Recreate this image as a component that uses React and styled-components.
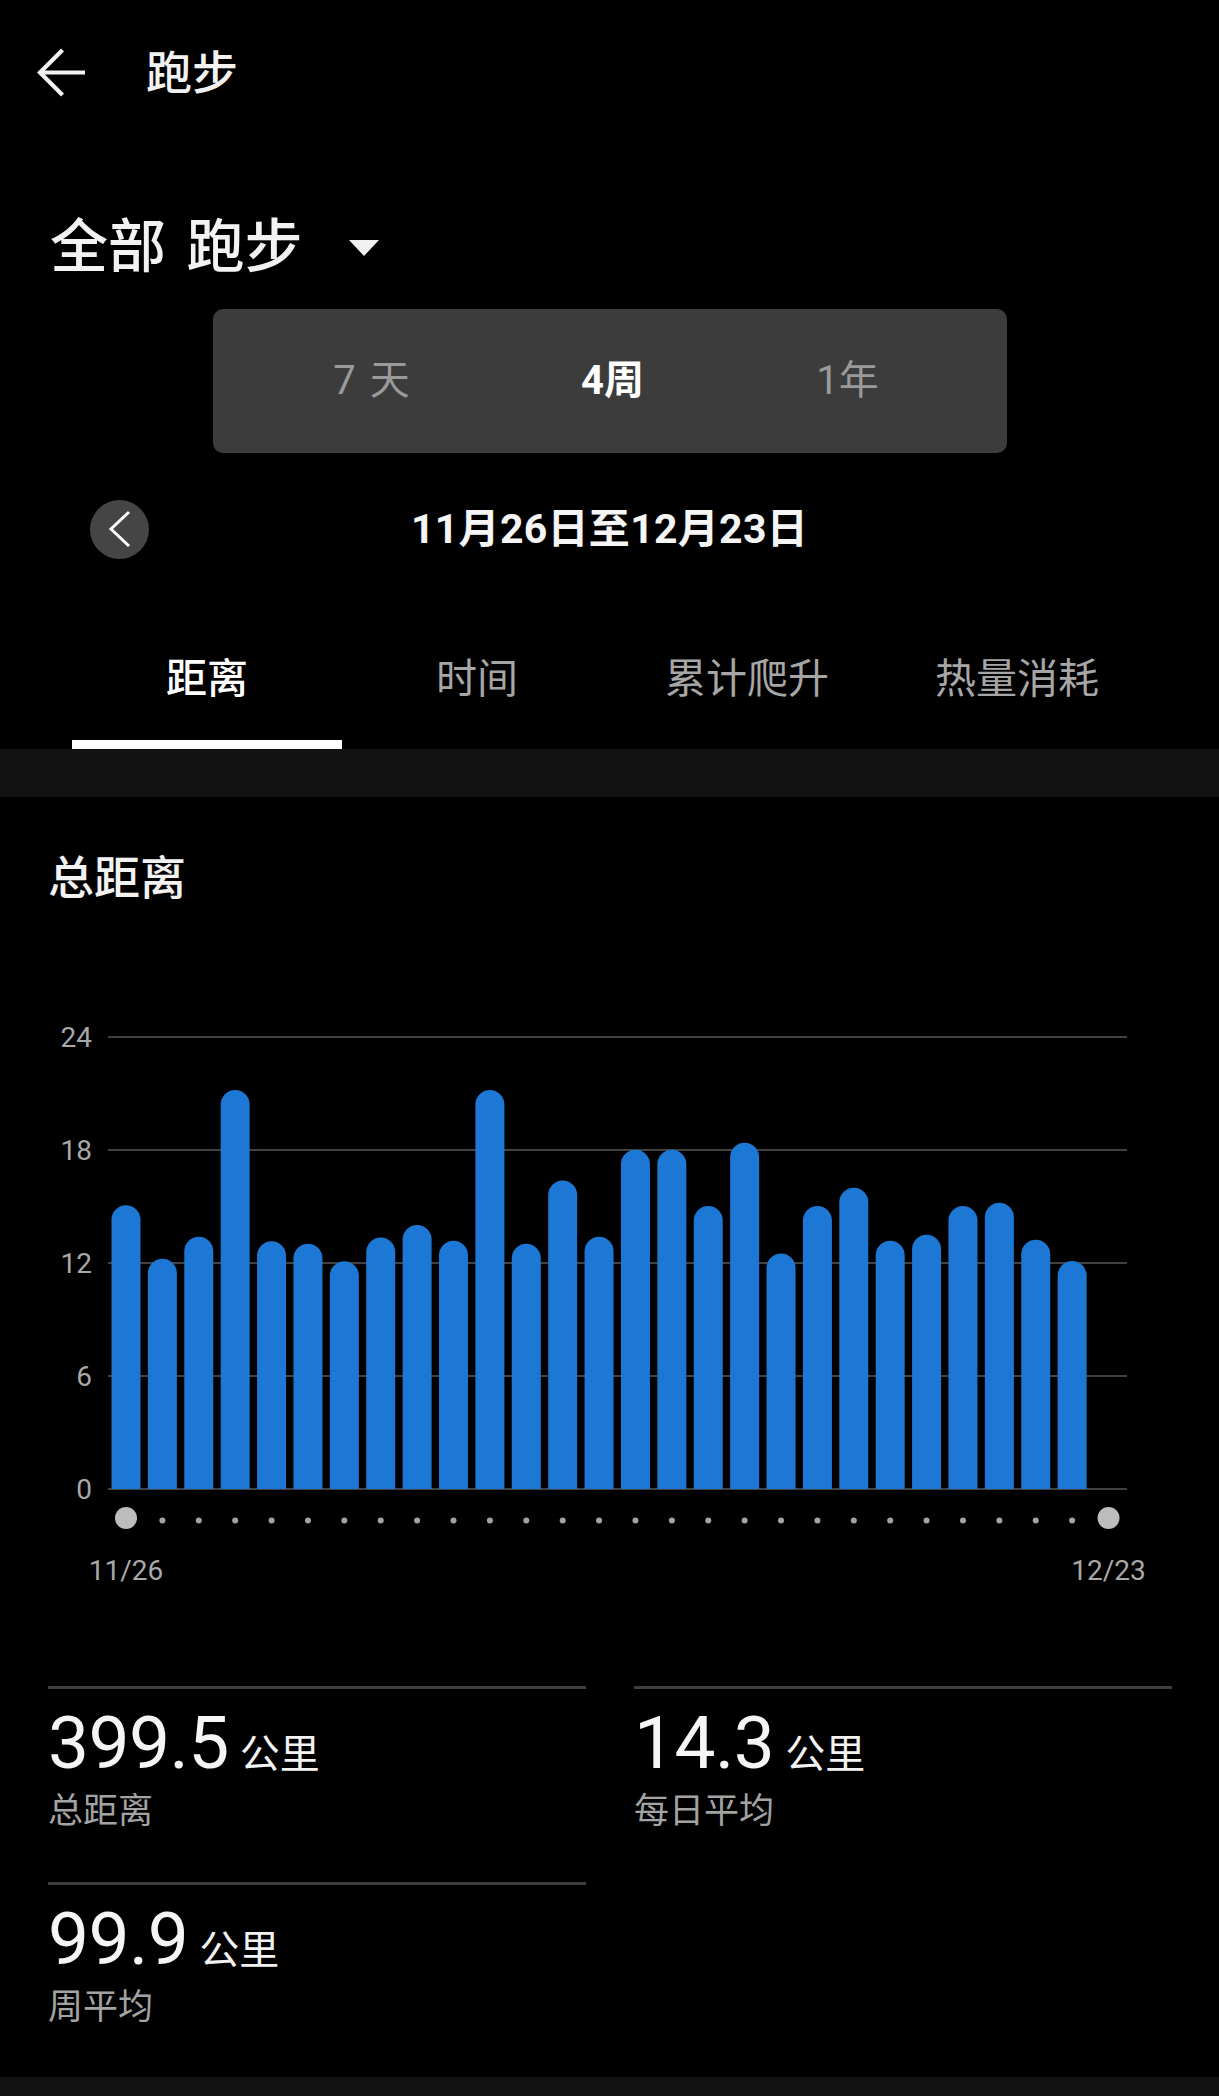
import React from "react";
import styled, { createGlobalStyle } from "styled-components";

const GlobalStyle = createGlobalStyle`
  html, body {
    margin: 0;
    padding: 0;
    background: #000;
  }
  body {
    font-family: Roboto, "Noto Sans CJK SC", "Noto Sans", sans-serif;
    color: #f2f2f2;
    -webkit-font-smoothing: antialiased;
  }
  * { box-sizing: border-box; }
`;

const Page = styled.div`
  width: 1219px;
  min-height: 2096px;
  background: #000;
  display: flex;
  flex-direction: column;
`;

const Header = styled.header`
  height: 146px;
  display: flex;
  align-items: center;
  padding-left: 36px;
  gap: 60px;
`;

const IconButton = styled.button`
  border: 0;
  padding: 0;
  background: transparent;
  display: flex;
  align-items: center;
  justify-content: center;
  color: #f2f2f2;
`;

const HeaderTitle = styled.h1`
  margin: 0;
  font-size: 46px;
  line-height: 60px;
  font-weight: 500;
  color: #f2f2f2;
`;

const FilterRow = styled.div`
  margin-top: 66px;
  padding-left: 50px;
  display: flex;
  align-items: center;
  height: 70px;
`;

const FilterTitle = styled.div`
  font-size: 58px;
  line-height: 70px;
  font-weight: 500;
  color: #f2f2f2;
  word-spacing: 6px;
`;

const Caret = styled.svg`
  margin-left: 47px;
  margin-top: 2px;
`;

const Segment = styled.div`
  margin: 27px auto 0;
  width: 794px;
  height: 144px;
  background: #3c3c3c;
  border-radius: 10px;
  padding: 0 40px;
  display: grid;
  grid-template-columns: repeat(3, 1fr);
  align-items: center;
`;

const SegmentItem = styled.div`
  text-align: center;
  font-size: 40px;
  line-height: 50px;
  font-weight: ${(p) => (p.$active ? 700 : 400)};
  color: ${(p) => (p.$active ? "#ffffff" : "#9a9a9a")};
  word-spacing: ${(p) => (p.$spaced ? "4px" : "0")};
  padding-left: ${(p) => (p.$active ? "6px" : "0")};
`;

const DateRow = styled.div`
  margin-top: 46px;
  height: 60px;
  padding: 0 90px;
  display: grid;
  grid-template-columns: 1fr auto 1fr;
  align-items: center;
`;

const PrevButton = styled.button`
  width: 59px;
  height: 59px;
  border-radius: 50%;
  border: 0;
  padding: 0;
  background: #454545;
  display: flex;
  align-items: center;
  justify-content: center;
  justify-self: start;
`;

const DateText = styled.div`
  font-size: 41px;
  line-height: 60px;
  font-weight: 700;
  color: #f5f5f5;
  letter-spacing: 0.3px;
`;

const Tabs = styled.nav`
  display: grid;
  grid-template-columns: repeat(4, 270px);
  padding-left: 72px;
`;

const Tab = styled.div`
  height: 190px;
  padding-top: 95px;
  text-align: center;
  font-size: 41px;
  line-height: 50px;
  font-weight: ${(p) => (p.$active ? 500 : 400)};
  color: ${(p) => (p.$active ? "#ffffff" : "#a6a6a6")};
  border-bottom: 9px solid ${(p) => (p.$active ? "#ffffff" : "transparent")};
`;

const Band = styled.div`
  height: ${(p) => p.$h}px;
  background: #121212;
`;

const CardTitle = styled.h2`
  margin: 51px 0 0;
  padding-left: 48px;
  font-size: 46px;
  line-height: 60px;
  font-weight: 500;
  color: #f2f2f2;
`;

const ChartSvg = styled.svg`
  display: block;
  margin-top: 92px;
  font-family: Roboto, "Noto Sans", sans-serif;
`;

const StatsGrid = styled.div`
  margin-top: 86px;
  padding: 0 47px 47px 48px;
  display: grid;
  grid-template-columns: 538px 538px;
  column-gap: 48px;
  row-gap: 48px;
`;

const Stat = styled.div`
  border-top: 3px solid #3e3e3e;
  padding-top: 14px;
`;

const StatValue = styled.div`
  font-size: 73px;
  line-height: 80px;
  height: 80px;
  font-weight: 400;
  color: #f5f5f5;
  white-space: nowrap;
  letter-spacing: -0.5px;
`;

const StatUnit = styled.span`
  font-size: 40px;
  line-height: 1;
  margin-left: 11px;
  letter-spacing: 0;
  color: #f2f2f2;
`;

const StatLabel = styled.div`
  margin-top: 7px;
  font-size: 35px;
  line-height: 44px;
  color: #a3a3a3;
`;

const values = [
  15.07, 12.22, 13.4, 21.18, 13.16, 13.02, 12.09, 13.35, 14.02, 13.18,
  21.18, 13.02, 16.38, 13.4, 18.01, 18.01, 15.03, 18.39, 12.51, 15.03,
  16.0, 13.18, 13.5, 15.03, 15.2, 13.23, 12.11,
];

const BASE = 489;
const UNIT = 452 / 24;
const X0 = 126;
const PITCH = 36.39;
const BAR_W = 29;

function barPath(cx, v) {
  const r = BAR_W / 2;
  const top = BASE - v * UNIT;
  const x = cx - r;
  return `M${x} ${BASE} V${top + r} A${r} ${r} 0 0 1 ${x + BAR_W} ${top + r} V${BASE} Z`;
}

function Chart() {
  const grid = [24, 18, 12, 6, 0];
  const dots = Array.from({ length: 28 }, (_, i) => X0 + i * PITCH);
  return (
    <ChartSvg width="1219" height="600" viewBox="0 0 1219 600">
      {grid.map((g) => {
        const y = BASE - g * UNIT;
        return (
          <g key={g}>
            <line x1="108" x2="1127" y1={y} y2={y} stroke="#424242" strokeWidth="1.8" />
            <text x="92" y={y} textAnchor="end" dominantBaseline="central" fontSize="28" fill="#a8a8a8">
              {g}
            </text>
          </g>
        );
      })}
      {values.map((v, i) => (
        <path key={i} d={barPath(X0 + i * PITCH, v)} fill="#1d77d5" />
      ))}
      {dots.map((x, i) =>
        i === 0 || i === dots.length - 1 ? (
          <circle key={i} cx={x} cy="518" r="11" fill="#bdbdbd" />
        ) : (
          <circle key={i} cx={x} cy="520.5" r="3" fill="#a3a3a3" />
        )
      )}
      <text x={X0} y="570" textAnchor="middle" dominantBaseline="central" fontSize="28" fill="#a8a8a8">
        11/26
      </text>
      <text x={X0 + 27 * PITCH} y="570" textAnchor="middle" dominantBaseline="central" fontSize="28" fill="#a8a8a8">
        12/23
      </text>
    </ChartSvg>
  );
}

const stats = [
  { value: "399.5", label: "总距离" },
  { value: "14.3", label: "每日平均" },
  { value: "99.9", label: "周平均" },
];

export default function App() {
  return (
    <>
      <GlobalStyle />
      <Page>
        <Header>
          <IconButton aria-label="返回">
            <svg width="50" height="50" viewBox="0 0 50 50">
              <path d="M49 24.5 H4 M26.5 2 L4 24.5 L26.5 47" fill="none" stroke="#f2f2f2" strokeWidth="4.2" />
            </svg>
          </IconButton>
          <HeaderTitle>跑步</HeaderTitle>
        </Header>

        <FilterRow>
          <FilterTitle>全部 跑步</FilterTitle>
          <Caret width="30" height="16" viewBox="0 0 30 16">
            <polygon points="0,0 30,0 15,16" fill="#f2f2f2" />
          </Caret>
        </FilterRow>

        <Segment>
          <SegmentItem $spaced>7 天</SegmentItem>
          <SegmentItem $active>4周</SegmentItem>
          <SegmentItem>1年</SegmentItem>
        </Segment>

        <DateRow>
          <PrevButton aria-label="上一段">
            <svg width="24" height="38" viewBox="0 0 24 38">
              <path d="M21 2 L3 19 L21 36" fill="none" stroke="#ffffff" strokeWidth="3" />
            </svg>
          </PrevButton>
          <DateText>11月26日至12月23日</DateText>
          <span />
        </DateRow>

        <Tabs>
          <Tab $active>距离</Tab>
          <Tab>时间</Tab>
          <Tab>累计爬升</Tab>
          <Tab>热量消耗</Tab>
        </Tabs>

        <Band $h={48} />

        <CardTitle>总距离</CardTitle>
        <Chart />

        <StatsGrid>
          {stats.map((s) => (
            <Stat key={s.label}>
              <StatValue>
                {s.value}
                <StatUnit>公里</StatUnit>
              </StatValue>
              <StatLabel>{s.label}</StatLabel>
            </Stat>
          ))}
        </StatsGrid>

        <Band $h={60} />
      </Page>
    </>
  );
}
